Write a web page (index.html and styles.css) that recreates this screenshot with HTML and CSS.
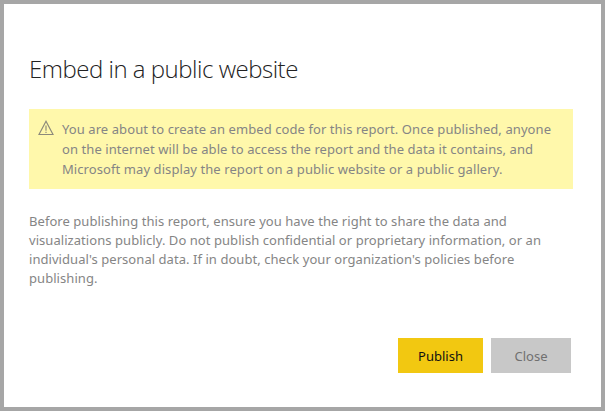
FILE: index.html
```html
<!DOCTYPE html>
<html lang="en">
<head>
<meta charset="utf-8">
<title>Embed in a public website</title>
<link rel="stylesheet" href="styles.css">
</head>
<body>
<main class="dialog">
  <h1 class="title">Embed in a public website</h1>
  <div class="warning">
    <svg class="icon" viewBox="0 0 16 16" fill="none" stroke="#8c897b" stroke-width="1.15"><path d="M8 1.3 1 14.5h14z"/><path d="M8 5.5v5.2M8 11.8v1.3"/></svg>
    <p class="text">You are about to create an embed code for this report. Once published, anyone<br>on the internet will be able to access the report and the data it contains, and<br>Microsoft may display the report on a public website or a public gallery.</p>
  </div>
  <p class="text note">Before publishing this report, ensure you have the right to share the data and<br>visualizations publicly. Do not publish confidential or proprietary information, or an<br>individual's personal data. If in doubt, check your organization's policies before<br>publishing.</p>
  <div class="actions">
    <button class="button primary">Publish</button>
    <button class="button">Close</button>
  </div>
</main>
</body>
</html>
```
FILE: styles.css
```css
* { box-sizing: border-box; }
body { margin: 0; font-family: "Noto Sans", "Open Sans", sans-serif; }
.dialog {
  display: flex;
  flex-direction: column;
  width: 605px;
  height: 411px;
  padding: 47px 28px 34px 25px;
  border: 4px solid #a6a6a6;
  background: #fff;
}
.title { margin: 0; height: 58px; font: 300 24px/36px "Open Sans", sans-serif; letter-spacing: -0.49px; color: #222; white-space: nowrap; }
.warning { display: flex; gap: 8px; width: 544px; height: 80px; padding: 10px 9px; background: #fff8ab; }
.icon { flex: none; width: 16px; height: 16px; margin-top: 1px; }
.text { margin: 0; font-size: 13px; line-height: 20px; letter-spacing: 0.08px; color: #858585; white-space: nowrap; }
.note { margin-top: 23px; line-height: 19px; letter-spacing: 0.055px; }
.actions { display: flex; justify-content: flex-end; gap: 8px; margin-top: auto; padding-right: 2px; }
.button { width: 80px; height: 35px; padding: 0; border: 0; background: #c8c8c8; color: #707070; font: 13px "Noto Sans", sans-serif; }
.primary { width: 85px; background: #f2c811; color: #111; }
```
